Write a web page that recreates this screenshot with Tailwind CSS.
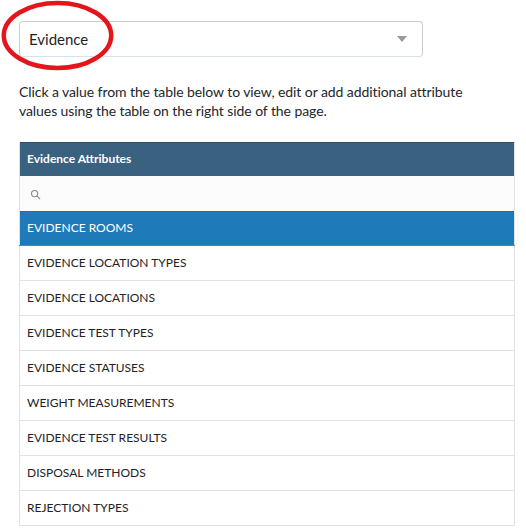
<!DOCTYPE html>
<html>
<head>
<meta charset="utf-8">
<script src="https://cdn.jsdelivr.net/npm/@tailwindcss/browser@4"></script>
</head>
<body class="bg-white font-['Lato',sans-serif] text-[#1f2328]">
<div class="relative w-[526px] h-[529px] overflow-hidden pt-[21px] pl-[19px] pr-[10px]">
  <div class="w-[404px] h-[36px] border border-[#cccccc] border-b-[#d5e3ee] rounded-[4px] flex items-center justify-between pl-[9px] pr-[15px] text-[15px] bg-white">
    <span>Evidence</span>
    <svg width="10" height="6" viewBox="0 0 10 6"><path d="M0 0H10L5 6Z" fill="#9a9a9a"/></svg>
  </div>
  <p class="mt-[25px] text-[14px] leading-[19px] tracking-[-0.08px] w-[470px] text-[#22262b]">Click a value from the table below to view, edit or add additional attribute values using the table on the right side of the page.</p>
  <div class="mt-[22px] w-[496px] text-[12px] border-x border-[#e2e2e2]">
    <div class="h-[34px] bg-[#3a617f] border-t border-[#2f5069] text-white font-bold flex items-center pl-[7px] pb-[2px]">Evidence Attributes</div>
    <div class="h-[35px] bg-[#fcfcfc] flex items-center pl-[10px] pt-[2px]">
      <svg width="11" height="11" viewBox="0 0 12 12" fill="none" stroke="#8a8a8a" stroke-width="1.2"><circle cx="5" cy="5" r="3.4"/><path d="M7.6 7.6L11 11"/></svg>
    </div>
    <div class="h-[35px] bg-[#1f7aba] border-t border-[#1b72b0] text-white flex items-center pl-[7px] pb-[2px] relative">EVIDENCE ROOMS<span class="absolute -left-px -right-px bottom-0 h-px bg-[#3a8fd0]"></span></div>
    <div class="h-[35px] border-b border-[#e2e2e2] flex items-center pl-[7px]">EVIDENCE LOCATION TYPES</div>
    <div class="h-[35px] border-b border-[#e2e2e2] flex items-center pl-[7px]">EVIDENCE LOCATIONS</div>
    <div class="h-[35px] border-b border-[#e2e2e2] flex items-center pl-[7px]">EVIDENCE TEST TYPES</div>
    <div class="h-[35px] border-b border-[#e2e2e2] flex items-center pl-[7px]">EVIDENCE STATUSES</div>
    <div class="h-[35px] border-b border-[#e2e2e2] flex items-center pl-[7px]">WEIGHT MEASUREMENTS</div>
    <div class="h-[35px] border-b border-[#e2e2e2] flex items-center pl-[7px]">EVIDENCE TEST RESULTS</div>
    <div class="h-[35px] border-b border-[#e2e2e2] flex items-center pl-[7px]">DISPOSAL METHODS</div>
    <div class="h-[35px] border-b border-[#e2e2e2] flex items-center pl-[7px]">REJECTION TYPES</div>
  </div>
  <svg class="absolute left-0 top-0" width="120" height="76" viewBox="0 0 120 76" fill="none"><ellipse cx="57.5" cy="35.5" rx="53.7" ry="32.5" stroke="#e3161c" stroke-width="4.5"/></svg>
</div>
</body>
</html>
